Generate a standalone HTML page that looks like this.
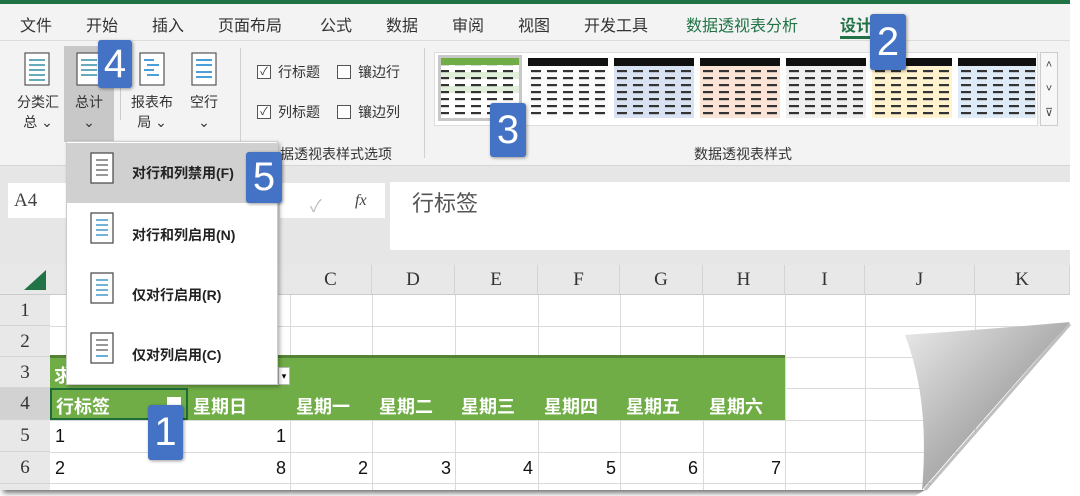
<!DOCTYPE html>
<html><head><meta charset="utf-8"><style>
*{margin:0;padding:0;box-sizing:border-box}
body{width:1080px;height:496px;background:#fff;position:relative;overflow:hidden;font-family:"Liberation Sans","Noto Sans CJK SC",sans-serif;}
.a{position:absolute}
.page{position:absolute;left:0;top:0;width:1070px;height:490px;background:#f3f3f3;box-shadow:3px 3px 5px rgba(0,0,0,.55);overflow:hidden}
.tab{position:absolute;top:12px;font-size:16px;color:#333}
.badge{position:absolute;background:#4472c4;color:#fff;font-size:40px;line-height:1;text-align:center;border-radius:3px;box-shadow:1px 1px 3px rgba(0,0,0,.4);font-family:"Liberation Sans",sans-serif}
.lbl{position:absolute;font-size:14px;color:#333;text-align:center;line-height:20px}
.cb{position:absolute;width:14px;height:14px;border:1px solid #555;background:#fff;font-size:11px;line-height:12px;text-align:center;color:#333}
.col{position:absolute;top:265px;height:30px;font-family:"Liberation Serif",serif;font-size:19px;color:#333;text-align:center;line-height:30px;border-right:1px solid #d4d4d4}
.row{position:absolute;left:0;width:50px;font-family:"Liberation Serif",serif;font-size:19px;color:#333;text-align:center;background:#e8e8e8;border-bottom:1px solid #d4d4d4}
.hl{position:absolute;left:50px;width:1020px;height:1px;background:#dadada}
.vl{position:absolute;top:295px;width:1px;height:195px;background:#dadada}
.wk{position:absolute;top:393px;color:#fff;font-weight:bold;font-size:18px}
.n{position:absolute;font-size:18px;color:#111}
.mi{position:absolute;left:66px;width:212px;height:60px}
.mi span{position:absolute;left:66px;top:20px;font-size:14px;font-weight:bold;color:#222}
</style></head><body>
<div class="page">
<div class="a" style="left:0;top:0;width:1070px;height:4px;background:#217346"></div>
<div class="tab" style="left:20px">文件</div>
<div class="tab" style="left:86px">开始</div>
<div class="tab" style="left:152px">插入</div>
<div class="tab" style="left:218px">页面布局</div>
<div class="tab" style="left:320px">公式</div>
<div class="tab" style="left:386px">数据</div>
<div class="tab" style="left:452px">审阅</div>
<div class="tab" style="left:518px">视图</div>
<div class="tab" style="left:584px">开发工具</div>
<div class="tab" style="left:686px;color:#217346">数据透视表分析</div>
<div class="tab" style="left:840px;color:#217346;font-weight:bold">设计</div>
<div class="a" style="left:840px;top:36px;width:34px;height:3px;background:#217346"></div>
<div class="a" style="left:0;top:40px;width:1070px;height:1px;background:#dcdcdc"></div>
<div class="a" style="left:64px;top:46px;width:50px;height:96px;background:#c8c8c8"></div>
<svg class="a" style="left:0;top:50px" width="240" height="40">
<g fill="#fff" stroke="#555" stroke-width="1.2">
<rect x="25" y="3" width="24" height="32"/><rect x="77" y="3" width="24" height="32"/><rect x="140" y="3" width="24" height="32"/><rect x="192" y="3" width="24" height="32"/></g>
<g stroke-width="2">
<path d="M29 10h16M29 15h16M29 20h16M29 25h16M29 30h16" stroke="#6ab"/>
<path d="M81 10h16M81 15h16M81 20h16M81 25h16" stroke="#6ab"/>
<path d="M144 10h10M147 15h12M144 20h10M147 25h12" stroke="#4a9fd8"/>
<path d="M196 10h16M196 15h16M196 22h16M196 27h16" stroke="#4a9fd8"/></g></svg>
<div class="lbl" style="left:14px;top:92px;width:48px">分类汇<br>总 ⌄</div>
<div class="lbl" style="left:66px;top:92px;width:46px">总计<br>⌄</div>
<div class="a" style="left:120px;top:60px;width:1px;height:60px;background:#ccc"></div>
<div class="lbl" style="left:128px;top:92px;width:48px">报表布<br>局 ⌄</div>
<div class="lbl" style="left:180px;top:92px;width:48px">空行<br>⌄</div>
<div class="a" style="left:240px;top:48px;width:1px;height:110px;background:#d0d0d0"></div>
<div class="cb" style="left:257px;top:65px">✓</div><div class="lbl" style="left:278px;top:62px">行标题</div>
<div class="cb" style="left:337px;top:65px"></div><div class="lbl" style="left:358px;top:62px">镶边行</div>
<div class="cb" style="left:257px;top:105px">✓</div><div class="lbl" style="left:278px;top:102px">列标题</div>
<div class="cb" style="left:337px;top:105px"></div><div class="lbl" style="left:358px;top:102px">镶边列</div>
<div class="lbl" style="left:280px;top:144px">据透视表样式选项</div>
<div class="a" style="left:424px;top:48px;width:1px;height:110px;background:#d0d0d0"></div>
<div class="a" style="left:434px;top:52px;width:604px;height:74px;background:#fff;border:1px solid #ddd"></div>
<svg class="a" style="left:436px;top:54px" width="600" height="70">
<defs>
<pattern id="d" width="16" height="7" patternUnits="userSpaceOnUse"><rect x="3" y="2" width="10" height="2.2" fill="#333"/></pattern>
</defs>
<rect x="2" y="1" width="84" height="66" fill="#c8c8c8"/>
<rect x="5" y="4" width="78" height="60" fill="#fff"/>
<rect x="5" y="4" width="78" height="7" fill="#70ad47"/>
<rect x="5" y="18" width="78" height="7" fill="#e2efda"/><rect x="5" y="32" width="78" height="7" fill="#e2efda"/>
<rect x="5" y="11" width="78" height="52" fill="url(#d)"/>
<g transform="translate(92,0)"><rect x="0" y="4" width="80" height="60" fill="#fafafa"/><rect x="0" y="4" width="80" height="8" fill="#111"/><rect x="0" y="13" width="80" height="50" fill="url(#d)"/></g>
<g transform="translate(178,0)"><rect x="0" y="4" width="80" height="60" fill="#d9e2f3"/><rect x="0" y="4" width="80" height="8" fill="#111"/><rect x="0" y="13" width="80" height="50" fill="url(#d)"/></g>
<g transform="translate(264,0)"><rect x="0" y="4" width="80" height="60" fill="#fbe4d5"/><rect x="0" y="4" width="80" height="8" fill="#111"/><rect x="0" y="13" width="80" height="50" fill="url(#d)"/></g>
<g transform="translate(350,0)"><rect x="0" y="4" width="80" height="60" fill="#efefef"/><rect x="0" y="4" width="80" height="8" fill="#111"/><rect x="0" y="13" width="80" height="50" fill="url(#d)"/></g>
<g transform="translate(436,0)"><rect x="0" y="4" width="80" height="60" fill="#fff2cc"/><rect x="0" y="4" width="80" height="8" fill="#111"/><rect x="0" y="13" width="80" height="50" fill="url(#d)"/></g>
<g transform="translate(522,0)"><rect x="0" y="4" width="80" height="60" fill="#deebf7"/><rect x="0" y="4" width="80" height="8" fill="#111"/><rect x="0" y="13" width="80" height="50" fill="url(#d)"/></g>
</svg>
<div class="a" style="left:1040px;top:52px;width:18px;height:74px;border:1px solid #ccc;background:#f7f7f7;font-size:11px;text-align:center;line-height:24px;color:#444">˄<br>˅<br>⊽</div>
<div class="lbl" style="left:694px;top:144px">数据透视表样式</div>
<div class="a" style="left:0;top:165px;width:1070px;height:100px;background:#e6e6e6;border-top:1px solid #d6d6d6"></div>
<div class="a" style="left:8px;top:183px;width:140px;height:35px;background:#fff"></div>
<div class="a" style="left:14px;top:190px;font-family:'Liberation Serif',serif;font-size:19px;color:#444">A4</div>
<div class="a" style="left:280px;top:183px;width:105px;height:35px;background:#fff"></div>
<div class="a" style="left:310px;top:192px;color:#bbb;font-size:17px">✓</div>
<div class="a" style="left:355px;top:192px;color:#444;font-size:16px;font-style:italic;font-family:'Liberation Serif',serif">fx</div>
<div class="a" style="left:390px;top:182px;width:680px;height:68px;background:#fff"></div>
<div class="a" style="left:412px;top:186px;font-size:22px;color:#555">行标签</div>
<div class="a" style="left:0;top:265px;width:1070px;height:30px;background:#e8e8e8;border-bottom:1px solid #ccc"></div>
<svg class="a" style="left:20px;top:268px" width="28" height="24"><path d="M26 2V22H4Z" fill="#217346"/></svg>
<div class="a" style="left:50px;top:295px;width:1020px;height:195px;background:#fff"></div>
<div class="col" style="left:290px;width:82px">C</div>
<div class="col" style="left:372px;width:83px">D</div>
<div class="col" style="left:455px;width:83px">E</div>
<div class="col" style="left:538px;width:82px">F</div>
<div class="col" style="left:620px;width:83px">G</div>
<div class="col" style="left:703px;width:82px">H</div>
<div class="col" style="left:785px;width:80px">I</div>
<div class="col" style="left:865px;width:110px">J</div>
<div class="col" style="left:975px;width:95px">K</div>
<div class="row" style="top:295px;height:31px;line-height:31px">1</div>
<div class="row" style="top:326px;height:31px;line-height:31px">2</div>
<div class="row" style="top:357px;height:31px;line-height:31px">3</div>
<div class="row" style="top:388px;height:32px;line-height:32px;background:#d2d2d2">4</div>
<div class="row" style="top:420px;height:32px;line-height:32px">5</div>
<div class="row" style="top:452px;height:32px;line-height:32px">6</div>
<div class="row" style="top:484px;height:8px"></div>
<div class="hl" style="top:326px"></div><div class="hl" style="top:357px"></div><div class="hl" style="top:388px"></div><div class="hl" style="top:420px"></div><div class="hl" style="top:452px"></div><div class="hl" style="top:483px"></div>
<div class="vl" style="left:290px"></div><div class="vl" style="left:372px"></div><div class="vl" style="left:455px"></div><div class="vl" style="left:538px"></div><div class="vl" style="left:620px"></div><div class="vl" style="left:703px"></div><div class="vl" style="left:785px"></div><div class="vl" style="left:865px"></div><div class="vl" style="left:975px"></div>
<div class="a" style="left:50px;top:357px;width:735px;height:63px;background:#70ad47"></div>
<div class="a" style="left:50px;top:355px;width:735px;height:3px;background:#548235"></div>
<div class="a" style="left:54px;top:362px;color:#fff;font-weight:bold;font-size:18px">求</div>
<div class="a" style="left:50px;top:388px;width:138px;height:32px;border:2px solid #1e6b3a"></div>
<div class="a" style="left:167px;top:397px;width:14px;height:14px;background:#fff"></div>
<div class="wk" style="left:56px">行标签</div>
<div class="wk" style="left:193px">星期日</div>
<div class="wk" style="left:296px">星期一</div>
<div class="wk" style="left:379px">星期二</div>
<div class="wk" style="left:461px">星期三</div>
<div class="wk" style="left:544px">星期四</div>
<div class="wk" style="left:626px">星期五</div>
<div class="wk" style="left:709px">星期六</div>
<div class="n" style="left:55px;top:426px">1</div><div class="n" style="left:276px;top:426px">1</div>
<div class="n" style="left:55px;top:458px">2</div><div class="n" style="left:276px;top:458px">8</div>
<div class="n" style="left:358px;top:458px">2</div><div class="n" style="left:441px;top:458px">3</div><div class="n" style="left:523px;top:458px">4</div><div class="n" style="left:606px;top:458px">5</div><div class="n" style="left:688px;top:458px">6</div><div class="n" style="left:771px;top:458px">7</div>
<div class="a" style="left:278px;top:367px;width:12px;height:18px;background:#fff;border:1px solid #bbb;font-size:9px;line-height:16px;text-align:center">▾</div>
<div class="a" style="left:66px;top:141px;width:212px;height:244px;background:#fff;box-shadow:2px 2px 4px rgba(0,0,0,.3);border:1px solid #ccc"></div>
<div class="a" style="left:67px;top:143px;width:210px;height:60px;background:#d0d0d0"></div>
<div class="mi" style="top:143px"><span>对行和列禁用(F)</span></div>
<div class="mi" style="top:205px"><span>对行和列启用(N)</span></div>
<div class="mi" style="top:265px"><span>仅对行启用(R)</span></div>
<div class="mi" style="top:325px"><span>仅对列启用(C)</span></div>
<svg class="a" style="left:90px;top:150px" width="30" height="230">
<g fill="#fff" stroke="#444" stroke-width="1.2"><rect x="1" y="3" width="22" height="30"/><rect x="1" y="63" width="22" height="30"/><rect x="1" y="123" width="22" height="30"/><rect x="1" y="183" width="22" height="30"/></g>
<g stroke-width="1.6"><path d="M6 10h12M6 15h12M6 20h12M6 25h12" stroke="#777"/>
<path d="M6 70h12M6 75h12M6 80h12M6 85h12" stroke="#49c"/>
<path d="M6 130h12M6 135h12M6 140h12M6 145h12" stroke="#49c"/>
<path d="M6 190h12M6 195h12M6 200h12" stroke="#777"/><path d="M6 206h12" stroke="#49c"/></g></svg>
<svg class="a" style="left:880px;top:300px" width="200" height="196">
<defs><linearGradient id="g" x1="0" y1="0" x2="1" y2="1"><stop offset="0" stop-color="#eaeaea"/><stop offset=".5" stop-color="#b0b0b0"/><stop offset="1" stop-color="#808080"/></linearGradient></defs>
<path d="M190 20 L40 196 L200 196 L200 0Z" fill="#fff"/>
<path d="M25 35 Q100 30 190 22 Q120 100 42 190 Q50 100 25 35Z" fill="url(#g)"/>
</svg>
</div>
<div class="a" style="left:1070px;top:0;width:10px;height:496px;background:#fff"></div>
<svg class="a" style="left:905px;top:318px" width="175" height="178"><path d="M165 4 L175 4 L175 178 L10 178 L20 172Z" fill="#fff"/><path d="M165 6 L20 172" stroke="rgba(0,0,0,.25)" stroke-width="3"/></svg>
<div class="badge" style="left:98px;top:40px;width:34px;height:48px;line-height:48px">4</div>
<div class="badge" style="left:870px;top:14px;width:36px;height:56px;line-height:56px">2</div>
<div class="badge" style="left:490px;top:103px;width:36px;height:54px;line-height:54px">3</div>
<div class="badge" style="left:246px;top:152px;width:36px;height:51px;line-height:51px">5</div>
<div class="badge" style="left:148px;top:405px;width:35px;height:55px;line-height:55px">1</div>
</body></html>
